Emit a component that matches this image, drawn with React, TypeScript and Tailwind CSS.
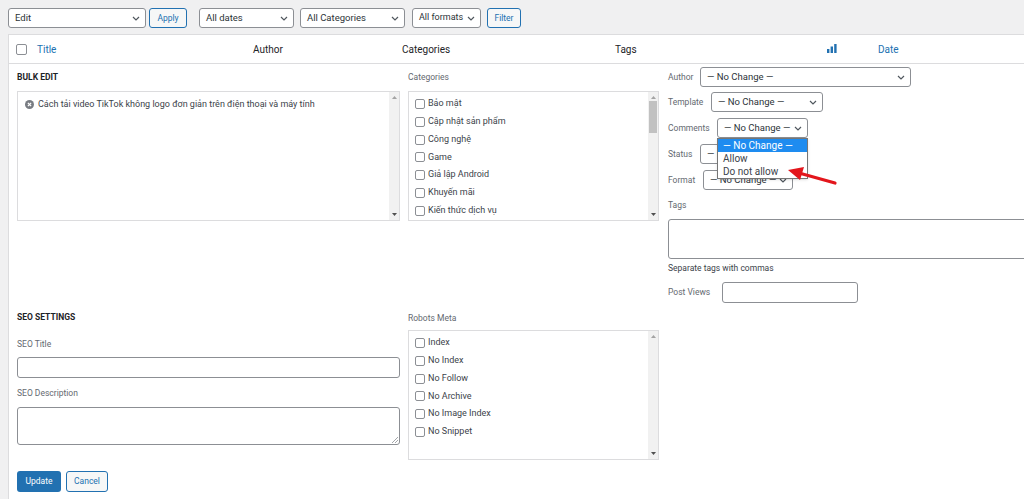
import React from 'react';

const font = { fontFamily: 'Roboto, "Noto Sans", "Liberation Sans", sans-serif' };

const Chevron = ({ className = '' }: { className?: string }) => (
  <svg width="8" height="5" viewBox="0 0 8 5" className={`shrink-0 ${className}`}>
    <path d="M1 1l3 3 3-3" fill="none" stroke="#50575e" strokeWidth="1.2" />
  </svg>
);

const Select = ({ label, className = '' }: { label: string; className?: string }) => (
  <div
    className={`flex items-center justify-between h-[20px] pl-[6px] pr-[5px] bg-white border border-[#8c8f94] rounded-[3px] text-[#2c3338] ${className}`}
  >
    <span className="whitespace-nowrap">{label}</span>
    <Chevron />
  </div>
);

const Box = () => <span className="w-[10px] h-[10px] border border-[#8c8f94] rounded-[2px] bg-white shrink-0" />;

const ScrollTrack = ({ thumb = false }: { thumb?: boolean }) => (
  <div className="w-[10px] bg-[#f1f1f1] flex flex-col items-center justify-between py-[4px]">
    <div className="flex flex-col items-center w-full gap-[2px]">
      <svg width="5" height="3" viewBox="0 0 5 3"><path d="M0 3L2.5 0 5 3z" fill="#a3a3a3" /></svg>
      {thumb && <div className="w-[8px] h-[32px] bg-[#c1c1c1]" />}
    </div>
    <svg width="5" height="3" viewBox="0 0 5 3"><path d="M0 0h5L2.5 3z" fill="#505050" /></svg>
  </div>
);

const CheckList = ({ items, thumb }: { items: string[]; thumb?: boolean }) => (
  <div className="flex h-[130px] border border-[#dcdcde] bg-white">
    <div className="flex-1 flex flex-col pl-[6px] pt-[6px] gap-[5.8px]">
      {items.map(i => (
        <div key={i} className="flex items-center gap-[3px] h-[12px] text-[9px] text-[#3c434a]">
          <Box />
          {i}
        </div>
      ))}
    </div>
    <ScrollTrack thumb={thumb} />
  </div>
);

const Label = ({ children, className = '' }: { children: React.ReactNode; className?: string }) => (
  <span className={`text-[8.5px] text-[#646970] whitespace-nowrap ${className}`}>{children}</span>
);

export default function App() {
  const categories = ['Bảo mật', 'Cập nhật sản phẩm', 'Công nghệ', 'Game', 'Giả lập Android', 'Khuyến mãi', 'Kiến thức dịch vụ'];
  const robots = ['Index', 'No Index', 'No Follow', 'No Archive', 'No Image Index', 'No Snippet'];

  return (
    <div style={font} className="w-[1024px] h-[499px] overflow-hidden bg-[#f0f0f1] relative">
      {/* Top filter bar */}
      <div className="h-[34px] flex items-start pt-[8px] pl-[8px] text-[9.5px]">
        <Select label="Edit" className="w-[138px]" />
        <button className="ml-[3px] w-[38px] h-[20px] border border-[#2271b1] rounded-[3px] bg-[#f6f7f7] text-[#2271b1] text-[8.5px]">Apply</button>
        <Select label="All dates" className="ml-[12px] w-[95px]" />
        <Select label="All Categories" className="ml-[6px] w-[105px]" />
        <Select label="All formats" className="ml-[7px] w-[69px] text-[9px]" />
        <button className="ml-[6px] w-[34px] h-[20px] border border-[#2271b1] rounded-[3px] bg-[#f6f7f7] text-[#2271b1] text-[8.5px]">Filter</button>
      </div>

      {/* Table */}
      <div className="ml-[8px] h-[465px] bg-white border-t border-l border-[#dcdcde]">
        {/* Header */}
        <div className="h-[29px] flex items-center border-b border-[#dcdcde] text-[10px] text-[#1d2327]">
          <span className="ml-[7px] w-[11px] h-[11px] border border-[#8c8f94] rounded-[2px]" />
          <span className="ml-[10px] w-[216px] text-[#2271b1]">Title</span>
          <span className="w-[149px]">Author</span>
          <span className="w-[213px]">Categories</span>
          <span className="w-[212px]">Tags</span>
          <svg width="10" height="9" viewBox="0 0 10 9" className="mb-[2px]">
            <rect x="0" y="5" width="2.4" height="4" fill="#2271b1" />
            <rect x="3.6" y="2.5" width="2.4" height="6.5" fill="#2271b1" />
            <rect x="7.2" y="0" width="2.4" height="9" fill="#2271b1" />
          </svg>
          <span className="ml-[41px] text-[#2271b1]">Date</span>
        </div>

        {/* Bulk edit row */}
        <div className="flex pl-[8px] pt-[3px] h-[246px]">
          <div className="w-[383px] flex flex-col">
            <div className="h-[20px] flex items-center text-[8.5px] font-bold text-[#1d2327]">BULK EDIT</div>
            <div className="mt-[4px] flex h-[130px] border border-[#dcdcde] bg-white">
              <div className="flex-1 pl-[7px] pt-[6px]">
                <div className="flex items-center gap-[4px] text-[9px] text-[#3c434a]">
                  <svg width="9" height="9" viewBox="0 0 10 10">
                    <circle cx="5" cy="5" r="5" fill="#787c82" />
                    <path d="M3.2 3.2l3.6 3.6M6.8 3.2L3.2 6.8" stroke="#fff" strokeWidth="1.4" />
                  </svg>
                  Cách tải video TikTok không logo đơn giản trên điện thoại và máy tính
                </div>
              </div>
              <ScrollTrack />
            </div>
          </div>

          <div className="ml-[8px] w-[251px] flex flex-col">
            <div className="h-[20px] flex items-center"><Label>Categories</Label></div>
            <div className="mt-[4px]"><CheckList items={categories} thumb /></div>
          </div>

          <div className="ml-[9px] flex-1 flex flex-col text-[9.5px]">
            <div className="flex items-center h-[20px]">
              <Label className="w-[32px]">Author</Label>
              <Select label="— No Change —" className="w-[211px]" />
            </div>
            <div className="flex items-center h-[20px] mt-[5px]">
              <Label className="w-[43px]">Template</Label>
              <Select label="— No Change —" className="w-[112px]" />
            </div>
            <div className="flex items-center h-[20px] mt-[6px]">
              <Label className="w-[49px]">Comments</Label>
              <Select label="— No Change —" className="w-[91px]" />
            </div>
            <div className="flex items-center h-[20px] mt-[6px]">
              <Label className="w-[32px]">Status</Label>
              <Select label="— No Change —" className="w-[91px]" />
            </div>
            <div className="flex items-center h-[20px] mt-[6px]">
              <Label className="w-[35px]">Format</Label>
              <Select label="— No Change —" className="w-[90px]" />
            </div>
            <div className="mt-[9px] h-[12px] flex items-center"><Label>Tags</Label></div>
            <div className="mt-[8px] h-[40px] border border-[#8c8f94] rounded-[3px] -mr-[4px]" />
            <div className="mt-[3px] h-[12px] flex items-center text-[8.5px] text-[#3c434a]">Separate tags with commas</div>
            <div className="flex items-center h-[21px] mt-[8px]">
              <Label className="w-[54px]">Post Views</Label>
              <div className="w-[136px] h-[21px] border border-[#8c8f94] rounded-[3px]" />
            </div>
          </div>
        </div>

        {/* SEO row */}
        <div className="flex pl-[8px]">
          <div className="w-[383px] flex flex-col">
            <div className="h-[14px] flex items-center text-[8.5px] font-bold text-[#1d2327]">SEO SETTINGS</div>
            <div className="mt-[14px] h-[12px] flex items-center"><Label>SEO Title</Label></div>
            <div className="mt-[7px] h-[21px] border border-[#8c8f94] rounded-[3px]" />
            <div className="mt-[9px] h-[12px] flex items-center"><Label>SEO Description</Label></div>
            <div className="mt-[8px] h-[38px] border border-[#8c8f94] rounded-[3px] relative">
              <svg width="6" height="6" viewBox="0 0 6 6" className="absolute right-[1px] bottom-[1px]">
                <path d="M0 6L6 0M3 6L6 3" stroke="#8c8f94" strokeWidth="0.8" />
              </svg>
            </div>
            <div className="mt-[26px] flex gap-[5px]">
              <button className="w-[44px] h-[21px] rounded-[3px] bg-[#2271b1] text-white text-[8.5px]">Update</button>
              <button className="w-[42px] h-[21px] rounded-[3px] border border-[#2271b1] bg-[#f6f7f7] text-[#2271b1] text-[8.5px]">Cancel</button>
            </div>
          </div>
          <div className="ml-[8px] w-[251px] flex flex-col">
            <div className="h-[14px] flex items-center mt-[1px]"><Label>Robots Meta</Label></div>
            <div className="mt-[5px]"><CheckList items={robots} /></div>
          </div>
        </div>
      </div>

      {/* Open comments dropdown */}
      <div className="absolute left-[717px] top-[138px] w-[91px] bg-white border border-[#767676] text-[10px] text-[#3c434a] shadow-sm">
        <div className="h-[13px] bg-[#1e8cf0] text-white pl-[5px] flex items-center">— No Change —</div>
        <div className="h-[13px] pl-[5px] flex items-center">Allow</div>
        <div className="h-[13px] pl-[5px] flex items-center">Do not allow</div>
      </div>

      {/* Red arrow */}
      <svg width="60" height="30" viewBox="0 0 60 30" className="absolute left-[785px] top-[163px]">
        <path d="M50 20L14 10" stroke="#e3161c" strokeWidth="3.2" strokeLinecap="round" />
        <path d="M3 7l16-3-4 13z" fill="#e3161c" />
      </svg>
    </div>
  );
}
